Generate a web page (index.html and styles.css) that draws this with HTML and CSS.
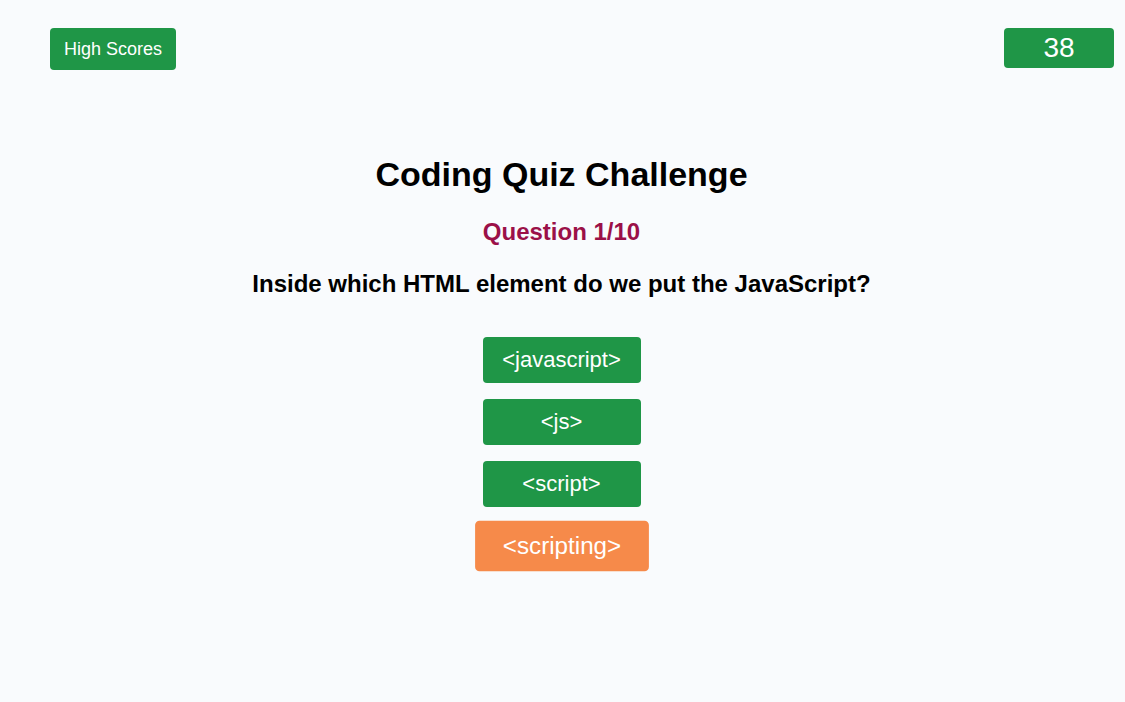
FILE: index.html
```html
<!DOCTYPE html>
<html lang="en">
<head>
<meta charset="utf-8">
<title>Coding Quiz Challenge</title>
<link rel="stylesheet" href="styles.css">
</head>
<body>
<header class="top-bar">
  <button class="btn high-scores">High Scores</button>
  <div class="timer">38</div>
</header>
<main class="quiz">
  <h1 class="title">Coding Quiz Challenge</h1>
  <h2 class="counter">Question 1/10</h2>
  <h3 class="question">Inside which HTML element do we put the JavaScript?</h3>
  <div class="answers">
    <button class="btn answer">&lt;javascript&gt;</button>
    <button class="btn answer">&lt;js&gt;</button>
    <button class="btn answer">&lt;script&gt;</button>
    <button class="btn answer hover">&lt;scripting&gt;</button>
  </div>
</main>
</body>
</html>
```
FILE: styles.css
```css
* { box-sizing: border-box; }
html, body { margin: 0; padding: 0; }
body {
  background: #f9fbfd;
  font-family: "Liberation Sans", Arial, Helvetica, sans-serif;
  color: #000;
  width: 1125px;
  height: 702px;
  overflow: hidden;
}
.top-bar {
  display: flex;
  justify-content: space-between;
  align-items: flex-start;
  padding: 28px 11px 0 50px;
}
.btn {
  font-family: inherit;
  border: none;
  background: #1f9647;
  color: #fff;
  border-radius: 4px;
  cursor: pointer;
}
.high-scores {
  width: 126px;
  height: 42px;
  font-size: 18px;
  padding: 0;
}
.timer {
  width: 110px;
  height: 40px;
  background: #1f9647;
  color: #fff;
  border-radius: 4px;
  font-size: 28px;
  display: flex;
  align-items: center;
  justify-content: center;
}
.quiz {
  display: flex;
  flex-direction: column;
  align-items: center;
  padding-top: 84px;
  padding-right: 2px;
}
.title {
  margin: 0;
  font-size: 34px;
  line-height: 40px;
  font-weight: bold;
}
.counter {
  margin: 24px 0 0;
  font-size: 24px;
  line-height: 28px;
  color: #9b1048;
  font-weight: bold;
}
.question {
  margin: 24px 0 0;
  font-size: 24px;
  line-height: 28px;
  font-weight: bold;
}
.answers {
  display: flex;
  flex-direction: column;
  align-items: center;
  gap: 16px;
  margin-top: 39px;
}
.answer {
  width: 158px;
  height: 46px;
  font-size: 22px;
  padding: 0;
}
.answer.hover {
  background: #f68a4a;
  transform: scale(1.1);
}
```
